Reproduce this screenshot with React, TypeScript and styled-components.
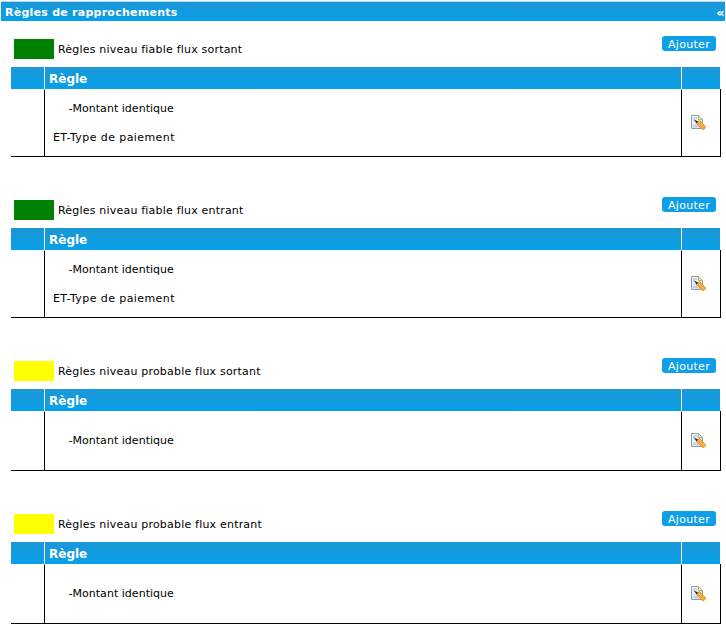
import styled, { createGlobalStyle } from "styled-components"

const GlobalStyle = createGlobalStyle`
    html, body {
        margin: 0;
        padding: 0;
        background-color: #FFFFFF;
    }
    body {
        font-family: "DejaVu Sans", Verdana, sans-serif;
        font-size: 11px;
        color: #000000;
    }
`

const Page = styled.div`
    width: 726px;
    height: 629px;
    overflow: hidden;
    box-sizing: border-box;
    padding-top: 1px;
`

const TitleBar = styled.div`
    height: 20px;
    box-sizing: border-box;
    margin: 0 1px;
    padding: 1px 0 0 4px;
    display: flex;
    align-items: center;
    justify-content: space-between;
    border-top: 1px solid #a8dcf5;
    background: linear-gradient(#1c97d5, #06a0ea);
    color: #FFFFFF;
    font-weight: 700;
    font-size: 11px;
    letter-spacing: 0.25px;
`

const Collapse = styled.span`
    font-size: 13px;
    line-height: 1;
`

const Section = styled.section`
    margin-bottom: 25px;
`

const SectionHead = styled.div`
    height: 46px;
    padding: 15px 10px 0 14px;
    box-sizing: border-box;
    display: flex;
    align-items: flex-start;
    justify-content: space-between;
`

const Legend = styled.div`
    display: flex;
    align-items: center;
    gap: 4px;
    height: 20px;
    margin-top: 3px;
    letter-spacing: 0.2px;
`

const Swatch = styled.span<{ $color: string }>`
    width: 40px;
    height: 20px;
    background-color: ${(p) => p.$color};
`

const AddButton = styled.button`
    width: 54px;
    height: 15px;
    padding: 2px 0 0;
    border: none;
    border-radius: 3px;
    background-color: #0f9fe6;
    color: #FFFFFF;
    font-family: inherit;
    font-size: 11px;
    line-height: 13px;
    letter-spacing: 0.3px;
`

const Table = styled.table`
    width: 709px;
    margin-left: 11px;
    border-collapse: separate;
    border-spacing: 0;
    table-layout: fixed;
`

const HeadCell = styled.th<{ $width: number }>`
    width: ${(p) => p.$width}px;
    height: 22px;
    padding: 1px 0 0 4px;
    box-sizing: border-box;
    background: linear-gradient(#1c97d5, #06a0ea);
    border-left: 1px solid #FFFFFF;
    color: #FFFFFF;
    font-size: 12px;
    font-weight: 700;
    text-align: left;

    &:first-child {
        border-left: none;
    }
`

const BodyCell = styled.td<{ $height: number }>`
    height: ${(p) => p.$height}px;
    padding: 0;
    box-sizing: border-box;
    border-top: 1px solid #FFFFFF;
    border-bottom: 1px solid #000000;
    border-left: 1px solid #000000;
    vertical-align: middle;

    &:first-child {
        border-left: none;
    }
    &:last-child {
        box-shadow: 1px 0 0 #000000;
    }
`

const RuleList = styled.div`
    display: flex;
    flex-direction: column;
    gap: 16px;
    padding-left: 8px;
`

const RuleLine = styled.div<{ $indent: number; $spacing: number }>`
    height: 13px;
    line-height: 13px;
    padding-left: ${(p) => p.$indent}px;
    letter-spacing: ${(p) => p.$spacing}px;

    &:only-child {
        margin-bottom: 2px;
    }
`

const IconCell = styled.div`
    display: flex;
    padding: 0 0 2px 8px;
`

function EditIcon() {
    return (
        <svg width="16" height="16" viewBox="0 0 16 16">
            <defs>
                <linearGradient id="sheet" x1="0" y1="0" x2="1" y2="1">
                    <stop offset="0" stopColor="#ffffff" />
                    <stop offset="1" stopColor="#c4d4ec" />
                </linearGradient>
            </defs>
            <path d="M1.5 1.5H8.5L12.5 5.5V14.5H1.5Z" fill="url(#sheet)" stroke="#8f9db3" />
            <path d="M8.5 1.5V5.5H12.5Z" fill="#f3ecc8" stroke="#bfae72" />
            <path d="M3 4H7M3 6H5M3 12H8" stroke="#a9bcd6" />
            <path d="M6.5 9.5L9.5 6.5L15.5 12.5L15.5 14L14 15.5L12.5 15.5Z" fill="#f5ae3c" stroke="#d88a1c" strokeWidth="0.7" />
            <path d="M4 5.5L8 7.5L6.5 9.5Z" fill="#262626" />
        </svg>
    )
}

type Rule = { text: string; indent: number; spacing: number }

type Block = {
    label: string
    color: string
    rules: Rule[]
    height: number
}

const montant: Rule = { text: "-Montant identique", indent: 15.5, spacing: 0.03 }
const paiement: Rule = { text: "ET-Type de paiement", indent: 0, spacing: 0.42 }

const blocks: Block[] = [
    { label: "Règles niveau fiable flux sortant", color: "#008000", rules: [montant, paiement], height: 68 },
    { label: "Règles niveau fiable flux entrant", color: "#008000", rules: [montant, paiement], height: 68 },
    { label: "Règles niveau probable flux sortant", color: "#FFFF00", rules: [montant], height: 60 },
    { label: "Règles niveau probable flux entrant", color: "#FFFF00", rules: [montant], height: 60 },
]

export default function App() {
    return (
        <>
            <GlobalStyle />
            <Page>
                <TitleBar>
                    Règles de rapprochements
                    <Collapse>«</Collapse>
                </TitleBar>

                {blocks.map((block) => (
                    <Section key={block.label}>
                        <SectionHead>
                            <Legend>
                                <Swatch $color={block.color} />
                                {block.label}
                            </Legend>
                            <AddButton>Ajouter</AddButton>
                        </SectionHead>
                        <Table>
                            <thead>
                                <tr>
                                    <HeadCell $width={33} />
                                    <HeadCell $width={637}>Règle</HeadCell>
                                    <HeadCell $width={39} />
                                </tr>
                            </thead>
                            <tbody>
                                <tr>
                                    <BodyCell $height={block.height} />
                                    <BodyCell $height={block.height}>
                                        <RuleList>
                                            {block.rules.map((rule) => (
                                                <RuleLine key={rule.text} $indent={rule.indent} $spacing={rule.spacing}>
                                                    {rule.text}
                                                </RuleLine>
                                            ))}
                                        </RuleList>
                                    </BodyCell>
                                    <BodyCell $height={block.height}>
                                        <IconCell>
                                            <EditIcon />
                                        </IconCell>
                                    </BodyCell>
                                </tr>
                            </tbody>
                        </Table>
                    </Section>
                ))}
            </Page>
        </>
    )
}
